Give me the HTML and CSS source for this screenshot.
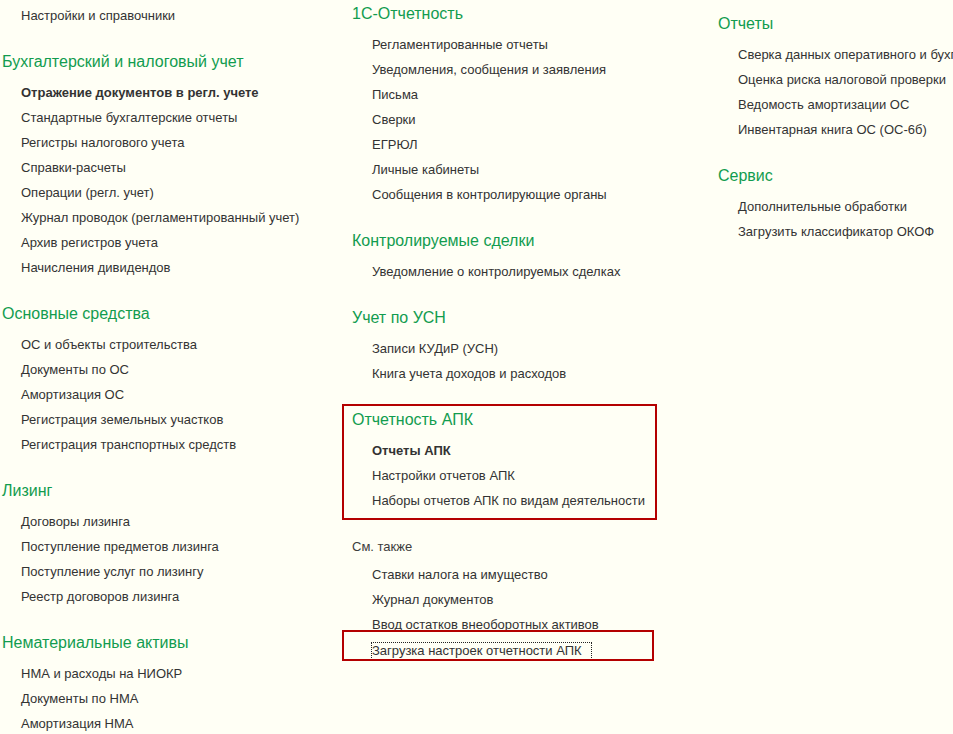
FILE: index.html
```html
<!DOCTYPE html>
<html lang="ru">
<head>
<meta charset="utf-8">
<title>Отчеты</title>
<link rel="stylesheet" href="styles.css">
</head>
<body>
<div class="panel">
  <div class="col col-1">
    <div class="group">
      <ul class="items">
        <li class="item">Настройки и справочники</li>
      </ul>
    </div>
    <div class="group">
      <div class="group-title">Бухгалтерский и налоговый учет</div>
      <ul class="items">
        <li class="item bold">Отражение документов в регл. учете</li>
        <li class="item">Стандартные бухгалтерские отчеты</li>
        <li class="item">Регистры налогового учета</li>
        <li class="item">Справки-расчеты</li>
        <li class="item">Операции (регл. учет)</li>
        <li class="item">Журнал проводок (регламентированный учет)</li>
        <li class="item">Архив регистров учета</li>
        <li class="item">Начисления дивидендов</li>
      </ul>
    </div>
    <div class="group">
      <div class="group-title">Основные средства</div>
      <ul class="items">
        <li class="item">ОС и объекты строительства</li>
        <li class="item">Документы по ОС</li>
        <li class="item">Амортизация ОС</li>
        <li class="item">Регистрация земельных участков</li>
        <li class="item">Регистрация транспортных средств</li>
      </ul>
    </div>
    <div class="group">
      <div class="group-title">Лизинг</div>
      <ul class="items">
        <li class="item">Договоры лизинга</li>
        <li class="item">Поступление предметов лизинга</li>
        <li class="item">Поступление услуг по лизингу</li>
        <li class="item">Реестр договоров лизинга</li>
      </ul>
    </div>
    <div class="group">
      <div class="group-title">Нематериальные активы</div>
      <ul class="items">
        <li class="item">НМА и расходы на НИОКР</li>
        <li class="item">Документы по НМА</li>
        <li class="item">Амортизация НМА</li>
      </ul>
    </div>
  </div>

  <div class="col col-2">
    <div class="group">
      <div class="group-title">1С-Отчетность</div>
      <ul class="items">
        <li class="item">Регламентированные отчеты</li>
        <li class="item">Уведомления, сообщения и заявления</li>
        <li class="item">Письма</li>
        <li class="item">Сверки</li>
        <li class="item">ЕГРЮЛ</li>
        <li class="item">Личные кабинеты</li>
        <li class="item">Сообщения в контролирующие органы</li>
      </ul>
    </div>
    <div class="group">
      <div class="group-title">Контролируемые сделки</div>
      <ul class="items">
        <li class="item">Уведомление о контролируемых сделках</li>
      </ul>
    </div>
    <div class="group">
      <div class="group-title">Учет по УСН</div>
      <ul class="items">
        <li class="item">Записи КУДиР (УСН)</li>
        <li class="item">Книга учета доходов и расходов</li>
      </ul>
    </div>
    <div class="group group-marked">
      <div class="group-title">Отчетность АПК</div>
      <ul class="items">
        <li class="item bold">Отчеты АПК</li>
        <li class="item">Настройки отчетов АПК</li>
        <li class="item">Наборы отчетов АПК по видам деятельности</li>
      </ul>
    </div>
    <div class="group">
      <div class="group-title see-also">См. также</div>
      <ul class="items items-see-also">
        <li class="item">Ставки налога на имущество</li>
        <li class="item">Журнал документов</li>
        <li class="item">Ввод остатков внеоборотных активов</li>
        <li class="item item-marked"><span class="focused">Загрузка настроек отчетности АПК</span></li>
      </ul>
    </div>
  </div>

  <div class="col col-3">
    <div class="group">
      <div class="group-title">Отчеты</div>
      <ul class="items">
        <li class="item">Сверка данных оперативного и бухгалтерского учета</li>
        <li class="item">Оценка риска налоговой проверки</li>
        <li class="item">Ведомость амортизации ОС</li>
        <li class="item">Инвентарная книга ОС (ОС-6б)</li>
      </ul>
    </div>
    <div class="group">
      <div class="group-title">Сервис</div>
      <ul class="items">
        <li class="item">Дополнительные обработки</li>
        <li class="item">Загрузить классификатор ОКОФ</li>
      </ul>
    </div>
  </div>
</div>
</body>
</html>
```

FILE: styles.css
```css
html, body {
  margin: 0;
  padding: 0;
  height: 100%;
  overflow: hidden;
  background: #fffff5;
}

body {
  font-family: "Liberation Sans", Arial, sans-serif;
  font-size: 13px;
  color: #333333;
}

.panel {
  display: flex;
  align-items: flex-start;
  white-space: nowrap;
}

.col {
  flex: none;
  display: flex;
  flex-direction: column;
}

.col-1 {
  width: 342px;
}

.col-2 {
  width: 366px;
  margin-top: -2px;
}

.col-3 {
  flex: 1;
  min-width: 0;
  padding-top: 8px;
}

.group {
  border: 2px solid transparent;
  padding: 1px 8px 5px 8px;
  margin-bottom: 11px;
  align-self: flex-start;
}

.col-1 .group {
  padding-left: 0;
}

.group-title {
  font-size: 16px;
  line-height: 25px;
  height: 25px;
  color: #129c4f;
  margin-bottom: 6px;
}

.group-title.see-also {
  font-size: 13px;
  color: #3c3c3c;
  margin-bottom: 3px;
}

.items {
  list-style: none;
  margin: 0;
  padding: 0;
}

.item {
  position: relative;
  line-height: 25px;
  height: 25px;
  padding-left: 20px;
}

.col-1 .item {
  padding-left: 19px;
}

.bold {
  font-weight: bold;
}

.group-marked {
  border-color: #b40000;
  width: 315px;
  box-sizing: border-box;
}

.item-marked::after {
  content: "";
  position: absolute;
  left: -10px;
  top: -7px;
  width: 312px;
  height: 31px;
  box-sizing: border-box;
  border: 2px solid #b40000;
  pointer-events: none;
}

.focused {
  display: inline-block;
  line-height: 16px;
  border: 1px dotted #222222;
  padding: 0 9px 0 0;
  margin-left: -1px;
  vertical-align: middle;
}
```
